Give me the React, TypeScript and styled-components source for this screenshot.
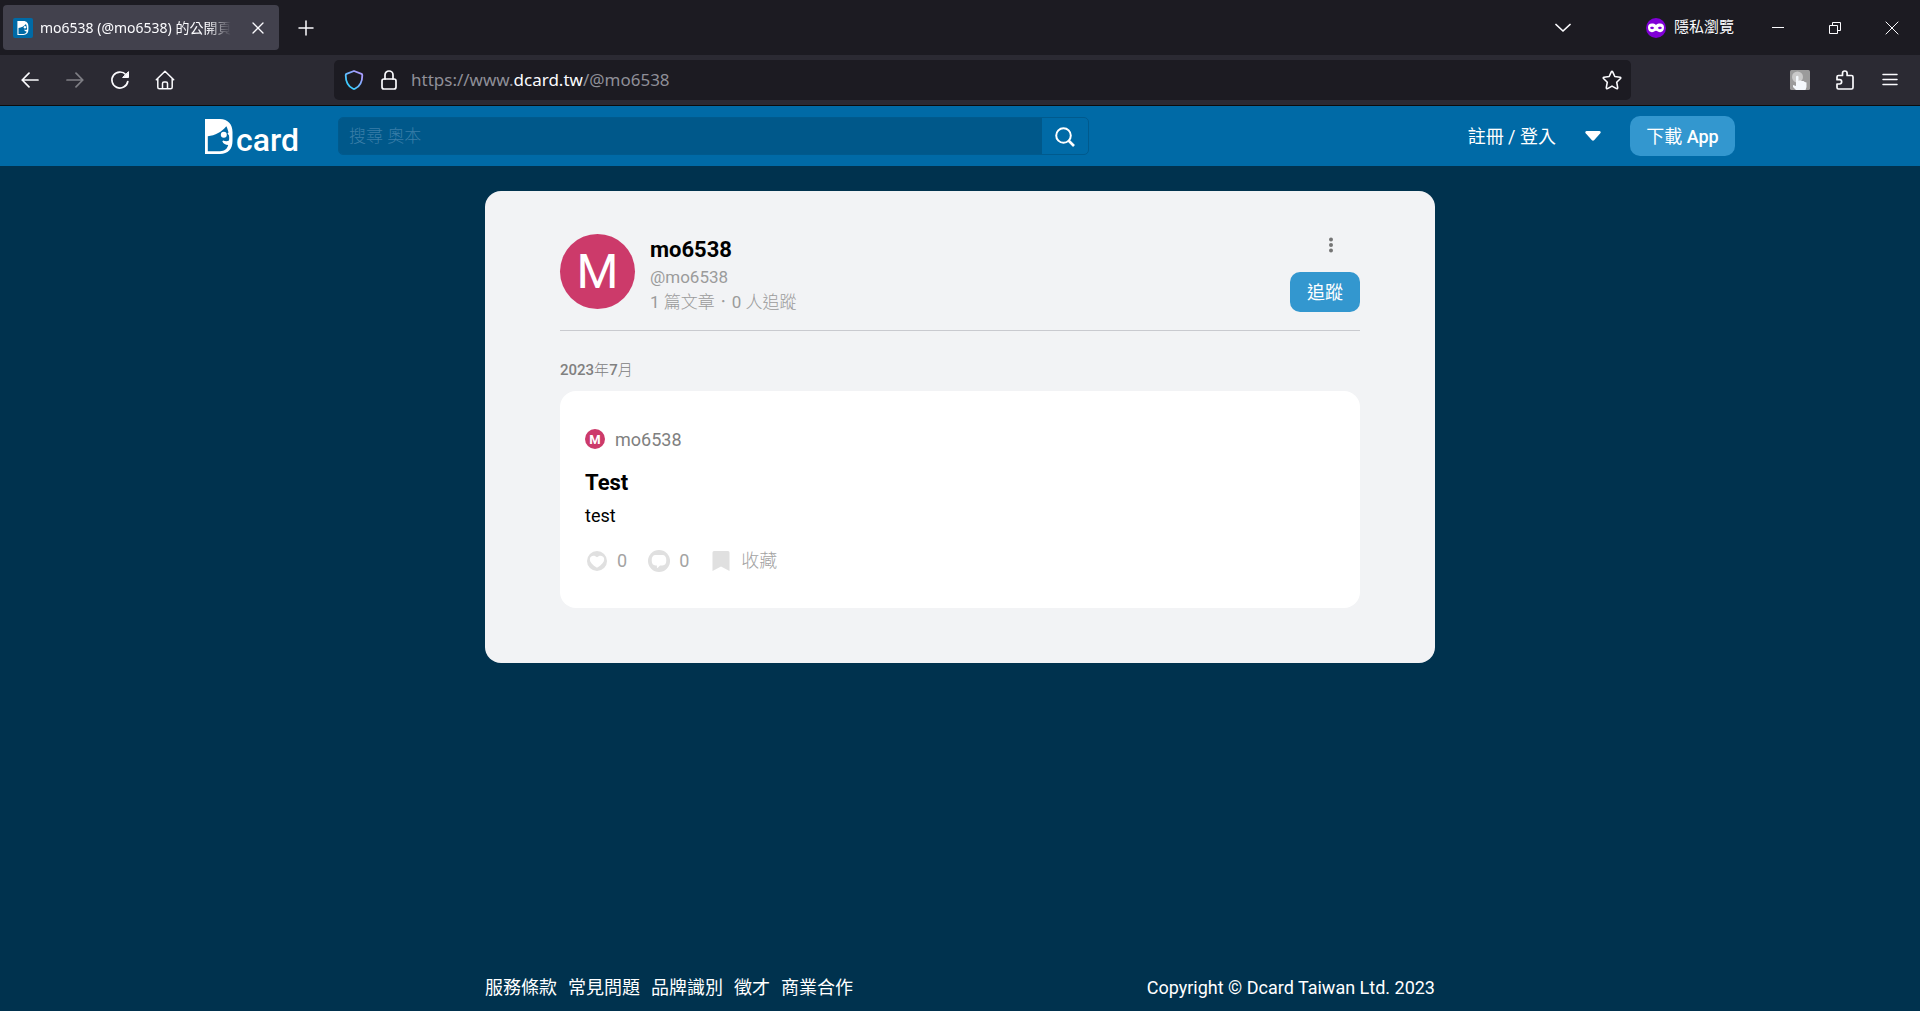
import React from 'react';
import styled, { createGlobalStyle } from 'styled-components';

const siteFont = 'Roboto, "Noto Sans CJK TC", sans-serif';
const chromeFont = '"Noto Sans", "Noto Sans CJK TC", sans-serif';

const GlobalStyle = createGlobalStyle`
  *, *::before, *::after { box-sizing: border-box; }
  body { margin: 0; background: #00324e; }
  h1, h2, h3, p { margin: 0; }
  a { color: inherit; text-decoration: none; }
  button, input { font: inherit; color: inherit; border: 0; padding: 0; margin: 0; background: none; }
  button { cursor: pointer; }
  svg { display: block; flex: none; }
`;

const Window = styled.div`
  display: flex;
  flex-direction: column;
  min-height: 100vh;
  font-family: ${siteFont};
`;

/* ---------- browser chrome ---------- */

const TabBar = styled.div`
  display: flex;
  align-items: center;
  height: 55px;
  padding-left: 3px;
  background: #1c1b22;
  color: #fbfbfe;
  font-family: ${chromeFont};
  font-size: 14px;
`;

const Tab = styled.div`
  display: flex;
  align-items: center;
  width: 276px;
  height: 45px;
  padding: 0 10px;
  border-radius: 4px;
  background: #42414d;
`;

const TabTitle = styled.span`
  margin: 0 auto 0 7px;
  white-space: nowrap;
  line-height: 24px;
  mask-image: linear-gradient(to left, transparent, #000 24px);
`;

const IconButton = styled.button<{ $width: number; $dim?: boolean }>`
  display: flex;
  flex: none;
  align-items: center;
  justify-content: center;
  width: ${(p) => p.$width}px;
  height: 40px;
  opacity: ${(p) => (p.$dim ? 0.4 : 1)};
`;

const Spring = styled.div`
  flex: 1;
`;

const PrivateBadge = styled.div`
  display: flex;
  align-items: center;
  gap: 8px;
  margin: 0 15px 0 53px;
  font-size: 15px;
  line-height: 24px;

  span {
    padding-bottom: 3px;
  }
`;

const Toolbar = styled.div`
  display: flex;
  align-items: center;
  height: 51px;
  padding: 0 8px 0 7px;
  border-bottom: 1px solid #0c0c0d;
  background: #2b2a33;
  color: #fbfbfe;
`;

const UrlBar = styled.div`
  display: flex;
  flex: 1;
  align-items: center;
  height: 40px;
  margin: 0 146px 0 147px;
  padding-left: 10px;
  border-radius: 5px;
  background: #1c1b22;
`;

const Url = styled.span`
  flex: 1;
  margin-left: 13px;
  color: #8f8f98;
  font-family: ${chromeFont};
  font-size: 17px;
  line-height: 24px;

  b {
    color: #fbfbfe;
    font-weight: 400;
  }
`;

const LockIcon = styled.svg`
  margin-left: 16px;
`;

/* ---------- site header ---------- */

const Header = styled.header`
  background: #006aa6;
  color: #fff;
`;

const HeaderInner = styled.div`
  display: flex;
  align-items: center;
  max-width: 1550px;
  height: 60px;
  margin: 0 auto;
  padding-left: 20px;
`;

const Logo = styled.a`
  display: flex;
  align-items: flex-end;
  gap: 3px;
  width: 133px;
  height: 35px;
  font-family: Roboto, sans-serif;
  font-size: 32px;
  font-weight: 500;
  line-height: 28px;
`;

const Search = styled.form`
  display: flex;
  flex: 0 1 751px;
  height: 38px;
  border: 1px solid #005a8d;
  border-radius: 5px;
  overflow: hidden;
`;

const SearchInput = styled.input`
  flex: 1;
  min-width: 0;
  padding: 0 10px;
  background: #00588a;
  font-size: 17px;
  font-weight: 300;
  outline: 0;

  &::placeholder {
    color: #3a7ea8;
    opacity: 1;
  }
`;

const Login = styled.a`
  font-size: 18px;
  line-height: 25px;
`;

const PrimaryButton = styled.button<{ $width: number }>`
  width: ${(p) => p.$width}px;
  height: 40px;
  border-radius: 10px;
  background: #3397cf;
  color: #fff;
  font-size: 18px;
  line-height: 25px;

  b {
    font-weight: 500;
  }
`;

/* ---------- profile ---------- */

const Main = styled.main`
  flex: 1;
  padding: 25px 0;
`;

const Panel = styled.section`
  max-width: 950px;
  margin: 0 auto;
  padding: 43px 75px 55px;
  border-radius: 16px;
  background: #f2f3f5;
`;

const Profile = styled.div`
  display: flex;
  align-items: flex-start;
  gap: 15px;
  height: 97px;
  border-bottom: 1px solid #c9cacf;
`;

const Avatar = styled.span<{ $size: number; $font: number; $weight: number }>`
  display: flex;
  flex: none;
  align-items: center;
  justify-content: center;
  width: ${(p) => p.$size}px;
  height: ${(p) => p.$size}px;
  border-radius: 50%;
  background: #cc3a6a;
  color: #fff;
  font-size: ${(p) => p.$font}px;
  font-weight: ${(p) => p.$weight};
  line-height: 1;
`;

const Identity = styled.div`
  flex: 1;
  color: #9b9b9b;
  font-size: 17px;
  line-height: 25px;
`;

const DisplayName = styled.h1`
  color: #000;
  font-size: 22px;
  font-weight: 700;
  line-height: 31px;
`;

const Counts = styled.p`
  span {
    font-weight: 300;
  }
`;

const ProfileActions = styled.div`
  display: flex;
  flex-direction: column;
  align-items: flex-end;
`;

const MoreButton = styled.button`
  display: flex;
  justify-content: center;
  width: 38px;
  height: 38px;
  margin-right: 10px;
  padding-top: 3px;
`;

const Month = styled.h2`
  margin: 28px 0 10px;
  color: #808080;
  font-size: 15px;
  font-weight: 500;
  line-height: 22px;

  span {
    font-weight: 300;
  }
`;

const Post = styled.article`
  padding: 38px 25px 35px;
  border-radius: 16px;
  background: #fff;
`;

const Author = styled.div`
  display: flex;
  align-items: center;
  gap: 10px;
  height: 20px;
  color: #808080;
  font-size: 18px;
`;

const PostTitle = styled.h3`
  margin-top: 18px;
  font-size: 22px;
  font-weight: 700;
  line-height: 31px;
`;

const Excerpt = styled.p`
  margin-top: 5px;
  font-size: 18px;
  line-height: 25px;
`;

const Stats = styled.div`
  display: flex;
  align-items: center;
  gap: 20px;
  height: 25px;
  margin-top: 20px;
  color: #a3a3a3;
  font-size: 18px;
`;

const Stat = styled.button<{ $light?: boolean }>`
  display: flex;
  align-items: center;
  gap: 8px;
  font-weight: ${(p) => (p.$light ? 300 : 400)};
  line-height: 25px;
`;

/* ---------- footer ---------- */

const Footer = styled.footer`
  display: flex;
  justify-content: space-between;
  width: 100%;
  max-width: 950px;
  margin: 0 auto;
  padding-bottom: 11px;
  color: #fff;
  font-size: 18px;
  line-height: 25px;
`;

const FooterLinks = styled.nav`
  display: flex;
  gap: 11px;
`;

const stroke = {
  fill: 'none',
  stroke: 'currentColor',
  strokeWidth: 1.7,
  strokeLinecap: 'round' as const,
  strokeLinejoin: 'round' as const,
};

const Face = ({ width, height }: { width: number; height: number }) => (
  <svg width={width} height={height} viewBox="0 0 28 35" aria-hidden="true">
    <path
      fill="#fff"
      fillRule="evenodd"
      d="M0 0H15C23 0 27.500 5.500 27.500 13V22C27.500 30 23 35 15 35H0ZM2.800 17.300V32.200H15C19.500 32.200 22.300 29.800 23.200 26C20.500 26 18.300 24.800 17.300 22.300L18.200 21.500C20 22.300 22 22.800 24 21.500C24.300 20 24.300 18 24 16.500L22.500 14.500L23.500 13.500C23 11.200 22.300 9 21.300 7.300C17 13 10 16.500 2.800 17.300Z"
    />
    <circle cx="18.800" cy="15.800" r="3" fill="#fff" />
  </svg>
);

const footerLinks = ['服務條款', '常見問題', '品牌識別', '徵才', '商業合作'];

export default function App() {
  return (
    <Window>
      <GlobalStyle />
      <TabBar>
        <Tab>
          <svg width="20" height="20" viewBox="0 0 20 20">
            <rect width="20" height="20" rx="2" fill="#006aa6" />
            <g transform="translate(4 3)">
              <Face width={12} height={14} />
            </g>
          </svg>
          <TabTitle>mo6538 (@mo6538) 的公開頁</TabTitle>
          <IconButton $width={22} aria-label="關閉分頁">
            <svg width="12" height="12" viewBox="0 0 12 12" {...stroke} strokeWidth={1.3}>
              <path d="M1 1L11 11M11 1L1 11" />
            </svg>
          </IconButton>
        </Tab>
        <IconButton $width={53} aria-label="開新分頁">
          <svg width="16" height="16" viewBox="0 0 16 16" {...stroke} strokeWidth={1.5}>
            <path d="M8 1V15M1 8H15" />
          </svg>
        </IconButton>
        <Spring />
        <IconButton $width={60} aria-label="列出所有分頁">
          <svg width="16" height="10" viewBox="0 0 16 10" {...stroke}>
            <path d="M1 1.500L8 8L15 1.500" />
          </svg>
        </IconButton>
        <PrivateBadge>
          <svg width="20" height="20" viewBox="0 0 20 20">
            <circle cx="10" cy="10" r="10" fill="#8000d7" />
            <path
              fill="#fff"
              fillRule="evenodd"
              d="M10 7C11 5.900 12.500 5.500 14 5.500C16.600 5.500 18 7 18 9.600C18 12.500 16.300 14.200 14.200 14.200C12.300 14.200 11.200 12.800 10 12.800C8.800 12.800 7.700 14.200 5.800 14.200C3.700 14.200 2 12.500 2 9.600C2 7 3.400 5.500 6 5.500C7.500 5.500 9 5.900 10 7ZM4 10C4.700 8.300 7.300 8.300 8.200 10C7.300 11.500 4.900 11.500 4 10ZM11.800 10C12.700 8.300 15.300 8.300 16 10C15.100 11.500 12.700 11.500 11.800 10Z"
            />
          </svg>
          <span>隱私瀏覽</span>
        </PrivateBadge>
        <IconButton $width={57} aria-label="最小化">
          <svg width="12" height="2" viewBox="0 0 12 2">
            <path d="M0 0H12V1H0Z" fill="currentColor" />
          </svg>
        </IconButton>
        <IconButton $width={57} aria-label="還原">
          <svg width="12" height="12" viewBox="0 0 12 12" fill="none" stroke="currentColor">
            <path d="M0.500 3.500H8.500V11.500H0.500ZM3.500 3.500V0.500H11.500V8.500H8.500" />
          </svg>
        </IconButton>
        <IconButton $width={57} aria-label="關閉">
          <svg width="14" height="14" viewBox="0 0 14 14" fill="none" stroke="currentColor">
            <path d="M0.700 0.700L13.300 13.300M13.300 0.700L0.700 13.300" />
          </svg>
        </IconButton>
      </TabBar>

      <Toolbar>
        <IconButton $width={45} aria-label="上一頁">
          <svg width="18" height="16" viewBox="0 0 18 16" {...stroke}>
            <path d="M17 8H1.200M8 1.200L1.200 8L8 14.800" />
          </svg>
        </IconButton>
        <IconButton $width={45} $dim aria-label="下一頁">
          <svg width="18" height="16" viewBox="0 0 18 16" {...stroke}>
            <path d="M1 8H16.800M10 1.200L16.800 8L10 14.800" />
          </svg>
        </IconButton>
        <IconButton $width={45} aria-label="重新載入">
          <svg width="20" height="20" viewBox="0 0 20 20" {...stroke}>
            <path d="M17.800 11.500A8 8 0 1 1 16 4.800" />
            <path d="M18.500 2V7.500H13Z" fill="currentColor" strokeWidth="1" />
          </svg>
        </IconButton>
        <IconButton $width={45} aria-label="首頁">
          <svg width="20" height="20" viewBox="0 0 20 20" {...stroke} strokeWidth={1.5}>
            <path d="M1.300 9.800L10 1.200L18.700 9.800M2.800 8.500V17.300Q2.800 18.800 4.300 18.800H15.700Q17.200 18.800 17.200 17.300V8.500M7.500 18.500V13.500Q7.500 12 9 12H11Q12.500 12 12.500 13.500V18.500" />
          </svg>
        </IconButton>
        <UrlBar>
          <svg width="20" height="20" viewBox="0 0 20 20" fill="none">
            <defs>
              <linearGradient id="shield" x1="0" y1="1" x2="1" y2="0">
                <stop offset="0.250" stopColor="#3fcbff" />
                <stop offset="0.800" stopColor="#a79dff" />
              </linearGradient>
            </defs>
            <path
              d="M10 1L17.500 3.900Q18.300 4.300 18.300 5.200C18.300 11.500 15.800 16.500 10.900 18.800Q10 19.200 9.100 18.800C4.200 16.500 1.700 11.500 1.700 5.200Q1.700 4.300 2.500 3.900Z"
              stroke="url(#shield)"
              strokeWidth="1.800"
              strokeLinejoin="round"
            />
          </svg>
          <LockIcon width="18" height="20" viewBox="0 0 18 20" {...stroke}>
            <rect x="2" y="9" width="14" height="10" rx="2" />
            <path d="M5 9V5A4 4 0 0 1 13 5V9" />
          </LockIcon>
          <Url>
            https://www.<b>dcard.tw</b>/@mo6538
          </Url>
          <IconButton $width={38} aria-label="加入書籤">
            <svg width="20" height="20" viewBox="0 0 20 20" {...stroke} strokeWidth={1.6}>
              <path d="M9.300 1.800Q10 0.600 10.700 1.800L12.800 6.500L18 7.200Q19.300 7.500 18.500 8.500L14.700 12.200L15.700 17.600Q15.700 19 14.500 18.600L10 16.100L5.500 18.600Q4.300 19 4.300 17.600L5.300 12.200L1.500 8.500Q0.700 7.500 2 7.200L7.200 6.500Z" />
            </svg>
          </IconButton>
        </UrlBar>
        <IconButton $width={45} aria-label="擴充套件">
          <svg width="20" height="20" viewBox="0 0 20 20">
            <rect width="20" height="20" rx="1.500" fill="#9b9b9b" />
            <circle cx="7.500" cy="7" r="5.500" fill="#c9c9c9" />
            <path
              d="M6 6.500Q7.200 5.200 8.500 6.500V11L10 10.300L11.500 11L13.500 11L14.800 12L16.500 12.500V17L15.500 20H6L3 17V15L6 16Z"
              fill="#f4f8fc"
            />
          </svg>
        </IconButton>
        <IconButton $width={45} aria-label="擴充套件選單">
          <svg width="18" height="20" viewBox="0 0 18 20" {...stroke}>
            <path d="M2.500 5.500H6.500V3.300A2.300 2.300 0 0 1 11.100 3.300V5.500H15.500Q17 5.500 17 7V17.500Q17 19 15.500 19H2.500Q1 19 1 17.500V14H3.500A2 2 0 0 0 3.500 9.700H1V7Q1 5.500 2.500 5.500Z" />
          </svg>
        </IconButton>
        <IconButton $width={45} aria-label="選單">
          <svg width="16" height="14" viewBox="0 0 16 14" {...stroke} strokeWidth={1.5}>
            <path d="M1 1.500H15M1 6.500H15M1 11.500H15" />
          </svg>
        </IconButton>
      </Toolbar>

      <Header>
        <HeaderInner>
          <Logo href="#" aria-label="Dcard">
            <Face width={28} height={35} />
            <span>card</span>
          </Logo>
          <Search>
            <SearchInput aria-label="搜尋" placeholder="搜尋 奧本" />
            <IconButton $width={46} type="button" aria-label="送出搜尋">
              <svg width="20" height="22" viewBox="0 0 20 22" fill="none" stroke="currentColor" strokeWidth="2">
                <circle cx="8.500" cy="8.500" r="7.300" />
                <path d="M13.500 13.500L19 19" strokeWidth="2.600" />
              </svg>
            </IconButton>
          </Search>
          <Spring />
          <Login href="#">註冊 / 登入</Login>
          <IconButton $width={74} aria-label="更多">
            <svg width="16" height="10" viewBox="0 0 16 10">
              <path d="M1.500 0H14.500Q16.500 0.800 15.300 2.300L9.300 9Q8 10.300 6.700 9L0.700 2.300Q-0.500 0.800 1.500 0Z" fill="#fff" />
            </svg>
          </IconButton>
          <PrimaryButton $width={105}>
            下載 <b>App</b>
          </PrimaryButton>
        </HeaderInner>
      </Header>

      <Main>
        <Panel>
          <Profile>
            <Avatar $size={75} $font={48} $weight={400}>M</Avatar>
            <Identity>
              <DisplayName>mo6538</DisplayName>
              <p>@mo6538</p>
              <Counts>
                1 <span>篇文章．</span>0 <span>人追蹤</span>
              </Counts>
            </Identity>
            <ProfileActions>
              <MoreButton aria-label="更多選項">
                <svg width="4" height="16" viewBox="0 0 4 16" fill="#757575">
                  <circle cx="2" cy="2.500" r="2" />
                  <circle cx="2" cy="8" r="2" />
                  <circle cx="2" cy="13.500" r="2" />
                </svg>
              </MoreButton>
              <PrimaryButton $width={70}>追蹤</PrimaryButton>
            </ProfileActions>
          </Profile>

          <Month>
            2023<span>年</span>7<span>月</span>
          </Month>

          <Post>
            <Author>
              <Avatar $size={20} $font={13} $weight={700}>M</Avatar>
              mo6538
            </Author>
            <PostTitle>Test</PostTitle>
            <Excerpt>test</Excerpt>
            <Stats>
              <Stat aria-label="心情 0">
                <svg width="24" height="24" viewBox="0 0 24 24">
                  <circle cx="12" cy="12" r="10" fill="#e0e0e0" />
                  <path
                    d="M12 18.800C7.500 16 4.800 13.300 4.800 10.300C4.800 6.600 9.500 5.300 12 8.300C14.500 5.300 19.200 6.600 19.200 10.300C19.200 13.300 16.500 16 12 18.800Z"
                    fill="#fff"
                  />
                </svg>
                0
              </Stat>
              <Stat aria-label="回應 0">
                <svg width="24" height="24" viewBox="0 0 24 24">
                  <circle cx="12" cy="12" r="11" fill="#e0e0e0" />
                  <path
                    d="M8.500 6H15.500C18 6 19.300 8 19.300 11.300C19.300 14.700 18 16.500 15.500 16.500H13L10.800 18.800Q9.900 19.300 9.900 18.300V16.500H8.500C6 16.500 4.700 14.700 4.700 11.300C4.700 8 6 6 8.500 6Z"
                    fill="#fff"
                  />
                </svg>
                0
              </Stat>
              <Stat $light>
                <svg width="24" height="24" viewBox="0 0 24 24">
                  <path d="M5 2H19Q20.500 2 20.500 3.500V22L12 17.500L3.500 22V3.500Q3.500 2 5 2Z" fill="#e0e0e0" />
                </svg>
                收藏
              </Stat>
            </Stats>
          </Post>
        </Panel>
      </Main>

      <Footer>
        <FooterLinks>
          {footerLinks.map((label) => (
            <a key={label} href="#">{label}</a>
          ))}
        </FooterLinks>
        <span>Copyright © Dcard Taiwan Ltd. 2023</span>
      </Footer>
    </Window>
  );
}
